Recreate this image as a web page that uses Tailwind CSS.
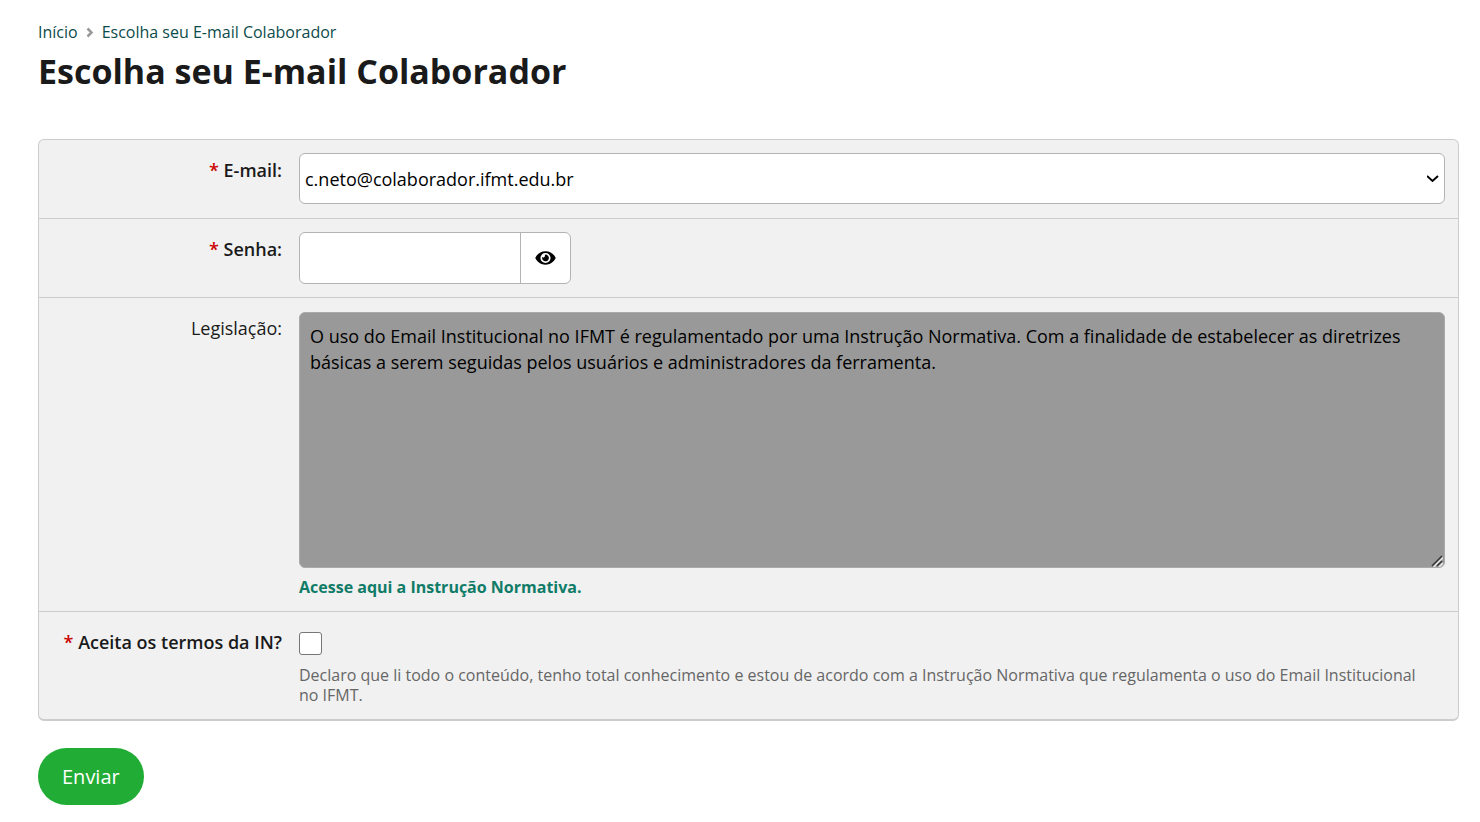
<!DOCTYPE html>
<html lang="pt-BR">

<head>
  <meta charset="UTF-8" />
  <meta name="viewport" content="width=device-width, initial-scale=1.0" />
  <title>Escolha seu E-mail Colaborador</title>
  <script src="https://cdn.jsdelivr.net/npm/@tailwindcss/browser@4"></script>
</head>

<body class="bg-white font-['Open_Sans',sans-serif] text-[#1a1a1a]">
  <main class="pl-[38px] pr-[21px] pt-5 pb-4">
    <!-- Navegação -->
    <nav class="flex items-center gap-2 text-base leading-6 text-[#0c4b4b]">
      <a href="#">Início</a>
      <svg class="w-2 h-3" viewBox="0 0 8 12" fill="none" stroke="#999" stroke-width="2.500"><path d="M1.500 2.500l4 4-4 4" /></svg>
      <a href="#">Escolha seu E-mail Colaborador</a>
    </nav>
    <h1 class="text-[34px] leading-[54px] font-bold">Escolha seu E-mail Colaborador</h1>

    <form class="mt-[41px]">
      <div class="rounded-md border border-b-2 border-[#ccc] bg-[#f1f1f1] divide-y divide-[#ccc]">
        <!-- E-mail -->
        <div class="flex gap-[17px] px-[13px] pt-[13px] pb-[14px]">
          <label for="email" class="w-[230px] shrink-0 pt-1 text-right text-lg leading-[26px] font-semibold"><span class="text-[#c00]">*</span> E-mail:</label>
          <div class="relative grow">
            <select id="email" class="block w-full h-[51px] appearance-none rounded-md border border-[#b3b3b3] bg-white px-[5px] text-lg text-black">
              <option>c.neto@colaborador.ifmt.edu.br</option>
            </select>
            <svg class="pointer-events-none absolute right-[6px] top-5 size-3" viewBox="0 0 12 12" fill="none" stroke="#000" stroke-width="2"><path d="M0 3l5.500 5L11 3" /></svg>
          </div>
        </div>

        <!-- Senha -->
        <div class="flex gap-[17px] px-[13px] py-[13px]">
          <label for="senha" class="w-[230px] shrink-0 pt-1 text-right text-lg leading-[26px] font-semibold"><span class="text-[#c00]">*</span> Senha:</label>
          <div class="flex h-[52px] w-[272px] rounded-md border border-[#b3b3b3] bg-white">
            <input type="password" id="senha" class="w-[220px] rounded-l-md px-3 text-lg" />
            <button type="button" aria-label="Mostrar senha" class="flex grow items-center justify-center border-l border-[#b3b3b3]">
              <svg class="h-[18px] w-[21px]" viewBox="0 0 576 512"><path d="M572.520 241.400C518.290 135.590 410.930 64 288 64S57.680 135.640 3.480 241.410a32.350 32.350 0 0 0 0 29.190C57.710 376.410 165.070 448 288 448s230.320-71.640 284.520-177.410a32.350 32.350 0 0 0 0-29.190zM288 400a144 144 0 1 1 144-144 143.930 143.930 0 0 1-144 144zm0-240a95.310 95.310 0 0 0-25.310 3.790 47.850 47.850 0 0 1-66.900 66.900A95.780 95.780 0 1 0 288 160z" /></svg>
            </button>
          </div>
        </div>

        <!-- Legislação -->
        <div class="flex gap-[17px] px-[13px] pt-[14px] pb-3">
          <label for="legislacao" class="w-[230px] shrink-0 pt-1 text-right text-lg leading-6">Legislação:</label>
          <div class="grow">
            <div class="relative">
              <textarea id="legislacao" readonly class="block h-64 w-full resize-none rounded-md border border-[#aaa] bg-[#999] px-[10px] py-[10px] text-lg leading-[26px] text-black">O uso do Email Institucional no IFMT é regulamentado por uma Instrução Normativa. Com a finalidade de estabelecer as diretrizes básicas a serem seguidas pelos usuários e administradores da ferramenta.</textarea>
              <svg class="pointer-events-none absolute right-[2px] bottom-[1px] size-3" viewBox="0 0 12 12" fill="none" stroke-width="1.500">
                <path d="M2.500 12L12 2.500M8 12l4-4" stroke="#ddd" stroke-width="2" />
                <path d="M1 11L11 1M6 11l5-5" stroke="#333" />
              </svg>
            </div>
            <a href="#" class="mt-[7px] block text-base leading-6 font-bold text-[#107c68]">Acesse aqui a Instrução Normativa.</a>
          </div>
        </div>

        <!-- Termos -->
        <div class="flex gap-[17px] px-[13px] pt-[13px] pb-[14px]">
          <label for="termos" class="w-[230px] shrink-0 pt-1 text-right text-lg leading-[26px] font-semibold"><span class="text-[#c00]">*</span> Aceita os termos da IN?</label>
          <div class="grow">
            <input type="checkbox" id="termos" class="mt-[7px] block size-[23px] appearance-none rounded-[3px] border border-[#767676] bg-white" />
            <p class="mt-[10px] pr-3 text-base leading-5 text-[#666]">Declaro que li todo o conteúdo, tenho total conhecimento e estou de acordo com a Instrução Normativa que regulamenta o uso do Email Institucional no IFMT.</p>
          </div>
        </div>
      </div>

      <button type="submit" class="mt-[27px] h-[57px] rounded-full bg-[#21ad35] px-6 text-xl text-white">Enviar</button>
    </form>
  </main>
</body>

</html>
